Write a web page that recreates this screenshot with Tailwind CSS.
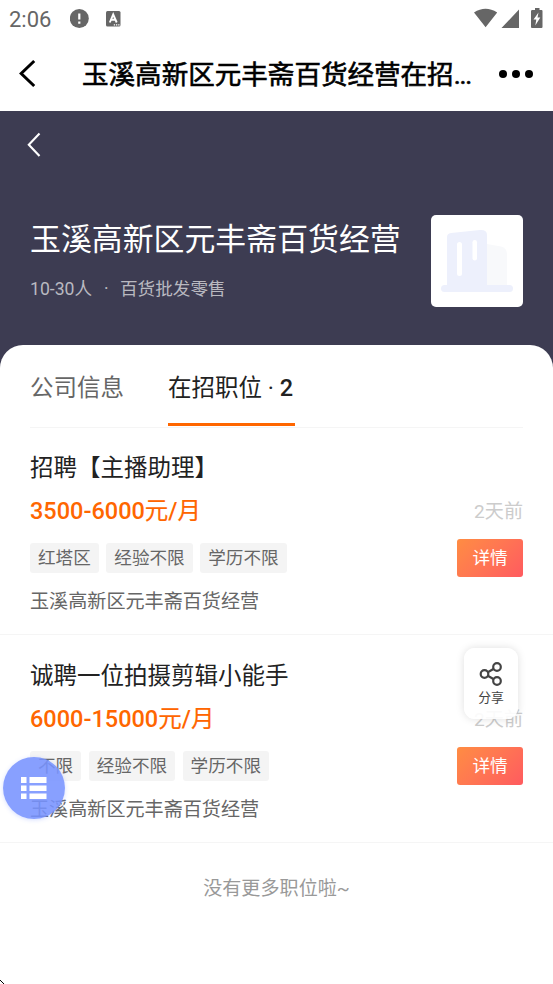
<!DOCTYPE html>
<html lang="zh-CN">
<head>
<meta charset="utf-8">
<title>在招职位</title>
<script src="https://cdn.jsdelivr.net/npm/@tailwindcss/browser@4"></script>
</head>
<body class="bg-white">
<div class="relative flex h-[984px] w-[553px] flex-col overflow-hidden bg-white font-[Roboto,'Noto_Sans_CJK_SC',sans-serif] whitespace-nowrap">

  <!-- Status bar -->
  <div class="flex h-[38px] shrink-0 items-center pl-[9px] text-[#666]">
    <span class="w-[61px] pt-px text-[22px] leading-[38px]">2:06</span>
    <svg class="h-5 w-5" viewBox="0 0 20 20"><circle cx="9.3" cy="9.5" r="9.5" fill="#666"/><path d="M9.3 4.5v6M9.3 12.5v2.2" stroke="#fff" stroke-width="2.2"/></svg>
    <svg class="ml-4 h-4 w-4" viewBox="0 0 16 16"><rect x="0" y="0" width="14.5" height="15.5" rx="1.5" fill="#666"/><path d="M3.8 11.5L7.2 3.5L10.7 11.5M5 8.8h4.4" fill="none" stroke="#fff" stroke-width="1.9"/><path d="M7.8 13.8h1.3M10 13.8h1.3M12.2 13.8h1.3" stroke="#fff" stroke-width="1.3"/></svg>
    <svg class="ml-auto h-[38px] w-[80px]" viewBox="473 0 80 38" fill="#666"><path d="M474 12.500Q485.500 5 497.200 12.500L485.600 27.200ZM519 9.500V28H501.500ZM532.500 10h2.500V8h4.500v2h2q1 0 1 1v16q0 1-1 1h-9.500q-1 0-1-1V11q0-1 1.500-1z"/><path d="M538.500 12.500l-5 7h2.800l-1 6 5-8h-2.800z" fill="#fff"/></svg>
  </div>

  <!-- Title bar -->
  <header class="flex h-[73px] shrink-0 items-center">
    <svg class="h-[73px] w-[82px] shrink-0" viewBox="0 38 82 73"><path d="M34.200 61L21.200 73.500L34.200 86" fill="none" stroke="#000" stroke-width="3"/></svg>
    <h1 class="w-[392px] text-[26.550px] leading-[40px] text-black [-webkit-text-stroke:0.6px_#000]">玉溪高新区元丰斋百货经营在招<span class="tracking-[-1.200px]">...</span></h1>
    <div class="mb-px ml-[25px] flex gap-[5px]"><i class="h-2 w-2 rounded-full bg-black"></i><i class="h-2 w-2 rounded-full bg-black"></i><i class="h-2 w-2 rounded-full bg-black"></i></div>
  </header>

  <!-- Company banner -->
  <section class="flex h-[260px] shrink-0 flex-col bg-[#3d3c52]">
    <svg class="h-[66px] w-[60px]" viewBox="0 111 60 66"><path d="M39.500 133.500L28.800 144.700L39.500 156" fill="none" stroke="#fff" stroke-width="2.100"/></svg>
    <div class="flex justify-between px-[30px] pt-[38px]">
      <div>
        <h2 class="mt-[2px] text-[30.900px] leading-[46px] text-white">玉溪高新区元丰斋百货经营</h2>
        <p class="mt-[11px] flex text-[17.600px] leading-[30px] text-[#b9b9c0]"><span class="w-[74px]">10-30人</span><span class="w-[16px]">·</span><span>百货批发零售</span></p>
      </div>
      <svg class="h-[92px] w-[92px] rounded-[5px] bg-white" viewBox="431 215 92 92">
        <path d="M487 244L501 246.500Q507 248 507 254V286H487Z" fill="#f8f9fb"/>
        <path d="M447 286V237Q447 233.500 451 233L480 230Q487 229.500 487 235V286Z" fill="#edf0fc"/>
        <rect x="441" y="285" width="72" height="7" rx="3.500" fill="#edf0fc"/>
        <rect x="457" y="242" width="5" height="34" rx="2.500" fill="#fff"/><rect x="472.500" y="240" width="4.500" height="20.500" rx="2.200" fill="#fff"/>
      </svg>
    </div>
  </section>

  <!-- Content sheet -->
  <main class="relative -mt-[26px] flex grow flex-col rounded-t-[23px] bg-white">
    <nav class="mx-[30px] flex h-[83px] shrink-0 border-b border-[#f5f5f5] text-[23.500px] leading-[86px]">
      <span class="w-[138px] text-[#666]">公司信息</span>
      <span class="relative h-[81px] w-[127px] border-b-[3px] border-[#ff6600] text-[#222]">在招职位 <span>·</span> <span class="font-medium">2</span></span>
    </nav>

    <article class="-mt-px flex h-[208px] shrink-0 justify-between border-b border-[#f5f5f5] px-[30px] pt-[23px]">
      <div class="leading-9">
        <h3 class="text-[23.500px] text-[#222]">招聘【主播助理】</h3>
        <p class="mt-[7px] text-[23.500px] font-medium text-[#ff6600]">3500-6000<span class="font-normal [-webkit-text-stroke:0.2px_#ff6600]">元</span>/<span class="font-normal [-webkit-text-stroke:0.2px_#ff6600]">月</span></p>
        <div class="mt-[14px] flex gap-[7.500px] text-[17.600px] leading-[31px] text-[#666]"><span class="h-[30px] rounded-[3px] bg-[#f4f4f4] px-2">红塔区</span><span class="h-[30px] rounded-[3px] bg-[#f4f4f4] px-2">经验不限</span><span class="h-[30px] rounded-[3px] bg-[#f4f4f4] px-2">学历不限</span></div>
        <p class="mt-[11px] text-[19.100px] text-[#666]">玉溪高新区元丰斋百货经营</p>
      </div>
      <div class="flex flex-col items-end pt-[44px]">
        <span class="text-[19.100px] leading-9 text-[#ccc]">2天前</span>
        <button class="mt-[9px] h-[38px] w-[66px] rounded-[3px] bg-linear-135 from-[#ff8c42] to-[#ff5a5f] text-[17.600px] leading-[37px] text-white">详情</button>
      </div>
    </article>

    <article class="flex h-[208px] shrink-0 justify-between border-b border-[#f5f5f5] px-[30px] pt-[23px]">
      <div class="leading-9">
        <h3 class="text-[23.500px] text-[#222]">诚聘一位拍摄剪辑小能手</h3>
        <p class="mt-[7px] text-[23.500px] font-medium text-[#ff6600]">6000-15000<span class="font-normal [-webkit-text-stroke:0.2px_#ff6600]">元</span>/<span class="font-normal [-webkit-text-stroke:0.2px_#ff6600]">月</span></p>
        <div class="mt-[14px] flex gap-[7.500px] text-[17.600px] leading-[31px] text-[#666]"><span class="h-[30px] rounded-[3px] bg-[#f4f4f4] px-2">不限</span><span class="h-[30px] rounded-[3px] bg-[#f4f4f4] px-2">经验不限</span><span class="h-[30px] rounded-[3px] bg-[#f4f4f4] px-2">学历不限</span></div>
        <p class="mt-[11px] text-[19.100px] text-[#666]">玉溪高新区元丰斋百货经营</p>
      </div>
      <div class="flex flex-col items-end pt-[44px]">
        <span class="text-[19.100px] leading-9 text-[#ccc]">2天前</span>
        <button class="mt-[9px] h-[38px] w-[66px] rounded-[3px] bg-linear-135 from-[#ff8c42] to-[#ff5a5f] text-[17.600px] leading-[37px] text-white">详情</button>
      </div>
    </article>

    <p class="pt-[28px] text-center text-[19.100px] leading-9 text-[#999]">没有更多职位啦~</p>
  </main>

  <!-- Floating share button -->
  <div class="absolute top-[648px] left-[464px] flex h-[71px] w-[54px] flex-col items-center rounded-[11px] bg-white/90 shadow-[0_0_8px_rgba(0,0,0,0.13)]">
    <svg class="mt-[13px] h-[26px] w-[26px]" viewBox="477.700 661 26 26" fill="none" stroke="#444" stroke-width="2.200"><circle cx="484.200" cy="674" r="3.800"/><circle cx="496.700" cy="667" r="3.800"/><circle cx="496.700" cy="681" r="3.800"/><path d="M487.500 672.200l6-3.400M487.500 675.800l6 3.400"/></svg>
    <span class="mt-px text-[12.800px] leading-5 text-[#444]">分享</span>
  </div>

  <!-- Floating list button -->
  <div class="absolute top-[757px] left-[3px] flex h-[62px] w-[62px] items-center justify-center rounded-full bg-[#7893ff]/88 shadow-[0_1px_4px_rgba(120,147,255,0.3)]">
    <svg class="h-[24px] w-[26px]" viewBox="0 0 26 24" fill="#fff"><path d="M0 1h5.500v6H0zM8.500 1h17v6h-17zM0 9.500h5.500v5.500H0zM8.500 9.500h17v5.500h-17zM0 17.500h5.500v5.500H0zM8.500 17.500h17v5.500h-17z"/></svg>
  </div>
  <svg class="absolute bottom-0 left-0 h-1 w-1" viewBox="0 0 4 4"><path d="M0 0h1v1h-1zM1 1h1v1h-1zM2 2h1v1h-1zM3 3h1v1h-1z"/></svg>
</div>
</body>
</html>
